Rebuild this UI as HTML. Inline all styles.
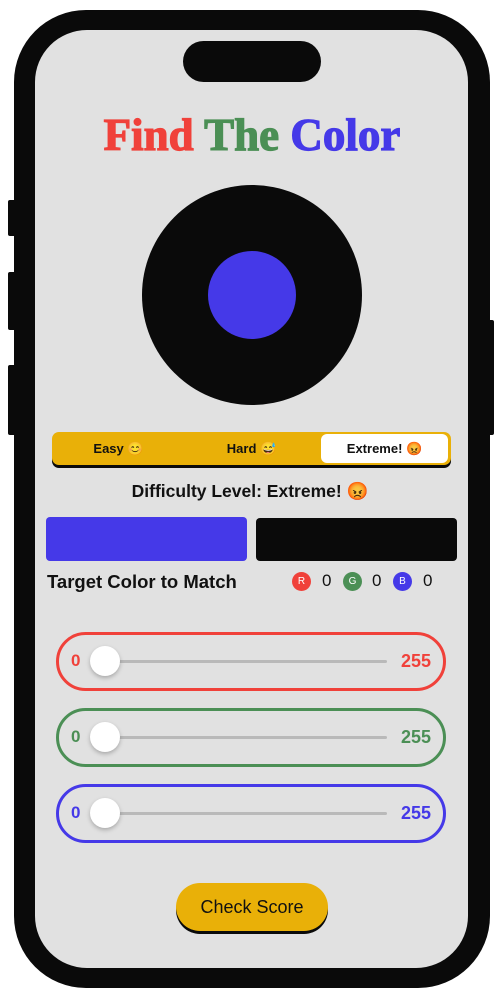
<!DOCTYPE html>
<html><head><meta charset="utf-8"><style>
*{margin:0;padding:0;box-sizing:border-box}
body{width:498px;height:996px;background:#fff;position:relative;overflow:hidden;font-family:"Liberation Sans","Noto Sans CJK JP",sans-serif}
.abs{position:absolute}
.frame{left:14px;top:10px;width:476px;height:978px;background:#0a0a0a;border-radius:72px}
.screen{left:35px;top:30px;width:433px;height:938px;background:#e1e1e1;border-radius:52px;overflow:hidden}
.btn{background:#0a0a0a;border-radius:2px}
.island{left:183px;top:41px;width:138px;height:41px;background:#0a0a0a;border-radius:21px}
.title{left:0;width:504px;top:109px;text-align:center;font-family:"Liberation Serif",serif;font-weight:bold;font-size:45px;letter-spacing:0px;-webkit-text-stroke:1.2px currentColor}
.seg{left:52px;top:432px;width:399px;height:33px;background:#e9b008;border-radius:7px;box-shadow:0 3px 0 #0a0a0a}
.seg div{position:absolute;top:0;height:33px;line-height:33px;font-size:13px;font-weight:bold;color:#111;text-align:center}
.slider{left:56px;width:390px;height:59px;border:3px solid;border-radius:30px}
.slider .l{position:absolute;left:12px;top:16px;font-size:17px;font-weight:bold}
.slider .r{position:absolute;right:12px;top:16px;font-size:18px;font-weight:bold}
.slider .t{position:absolute;left:60px;right:56px;top:25px;height:3px;background:#b9b9b9;border-radius:2px}
.slider .k{position:absolute;left:31px;top:11px;width:30px;height:30px;background:#fff;border-radius:50%;box-shadow:0 2px 4px rgba(0,0,0,.25)}
.dot{position:absolute;top:0;width:19px;height:19px;border-radius:50%;color:#fff;font-size:10px;text-align:center;line-height:19px}
.num{position:absolute;top:-1px;font-size:17px;color:#111}
</style></head><body>
<div class="abs btn" style="left:8px;top:200px;width:8px;height:36px"></div>
<div class="abs btn" style="left:8px;top:272px;width:8px;height:58px"></div>
<div class="abs btn" style="left:8px;top:365px;width:8px;height:70px"></div>
<div class="abs btn" style="left:486px;top:320px;width:8px;height:115px"></div>
<div class="abs frame"></div>
<div class="abs screen"></div>
<div class="abs island"></div>
<div class="abs title"><span style="color:#f0413a">Find</span> <span style="color:#4b8f55">The</span> <span style="color:#4539e8">Color</span></div>
<div class="abs" style="left:142px;top:185px;width:220px;height:220px;border-radius:50%;background:#0a0a0a"></div>
<div class="abs" style="left:208px;top:251px;width:88px;height:88px;border-radius:50%;background:#4539e8"></div>
<div class="abs seg">
<div style="left:0;width:133px">Easy 😊</div>
<div style="left:133px;width:133px">Hard 😅</div>
<div style="left:269px;width:127px;top:2px;height:29px;line-height:29px;background:#fff;border-radius:6px">Extreme! 😡</div>
</div>
<div class="abs" style="left:0;width:500px;top:481px;text-align:center;font-size:17.5px;font-weight:bold;color:#111">Difficulty Level: Extreme! 😡</div>
<div class="abs" style="left:46px;top:517px;width:201px;height:44px;background:#4539e8;border-radius:4px"></div>
<div class="abs" style="left:256px;top:518px;width:201px;height:43px;background:#0a0a0a;border-radius:4px"></div>
<div class="abs" style="left:47px;top:571px;font-size:18.5px;font-weight:bold;color:#111">Target Color to Match</div>
<div class="abs" style="left:0;top:572px;width:498px;height:20px">
<span class="dot" style="left:292px;background:#f0413a">R</span><span class="num" style="left:322px">0</span>
<span class="dot" style="left:343px;background:#4b8f55">G</span><span class="num" style="left:372px">0</span>
<span class="dot" style="left:393px;background:#4539e8">B</span><span class="num" style="left:423px">0</span>
</div>
<div class="abs slider" style="top:632px;border-color:#f0413a;color:#f0413a"><span class="l">0</span><div class="t"></div><div class="k"></div><span class="r">255</span></div>
<div class="abs slider" style="top:708px;border-color:#4b8f55;color:#4b8f55"><span class="l">0</span><div class="t"></div><div class="k"></div><span class="r">255</span></div>
<div class="abs slider" style="top:784px;border-color:#4539e8;color:#4539e8"><span class="l">0</span><div class="t"></div><div class="k"></div><span class="r">255</span></div>
<div class="abs" style="left:176px;top:883px;width:152px;height:48px;background:#e9b008;border-radius:24px;box-shadow:0 3px 0 #0a0a0a;text-align:center;line-height:48px;font-size:18px;color:#111">Check Score</div>
</body></html>
